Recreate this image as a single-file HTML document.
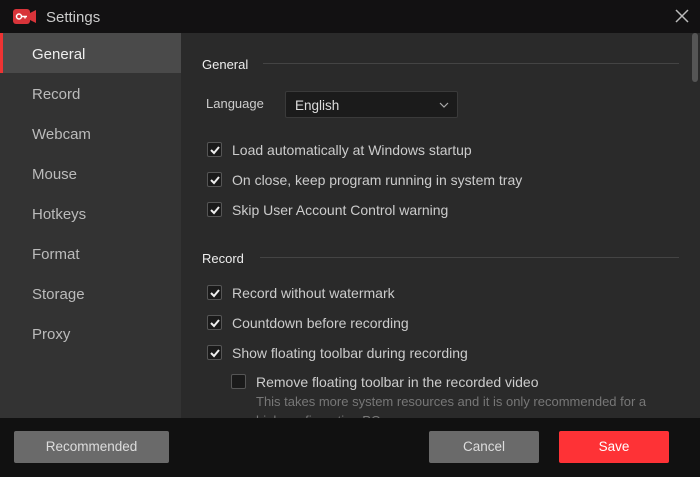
<!DOCTYPE html>
<html><head><style>
*{margin:0;padding:0;box-sizing:border-box}
body{width:700px;height:477px;background:#111;font-family:"Liberation Sans",sans-serif;overflow:hidden;position:relative;color:#ddd}
.title{position:absolute;left:0;top:0;width:700px;height:33px;background:#121112}
.title span{position:absolute;left:46px;top:8px;font-size:15px;color:#ccc}
.side{position:absolute;left:0;top:33px;width:181px;height:385px;background:#333}
.side div{height:40px;line-height:43px;padding-left:32px;font-size:15px;color:#bbb}
.side .sel{background:#4a4a4a;color:#eee;border-left:3px solid #e33;padding-left:29px}
.main{position:absolute;left:181px;top:33px;width:519px;height:385px;background:#2a2a2a;overflow:hidden}
.h{position:absolute;left:21px;font-size:13px;color:#eee}
.line{position:absolute;height:1px;background:#444;right:21px}
.cb{position:absolute;font-size:14px;color:#ccc;white-space:nowrap}
.cb i{position:absolute;left:-25px;top:0;width:15px;height:15px;border:1px solid #555;background:#1a1a1a;border-radius:2px}
.cb i svg{position:absolute;left:1px;top:1px}
.btn{position:absolute;top:431px;height:32px;line-height:32px;text-align:center;font-size:13.5px;border-radius:2px}
</style></head><body>
<div class="title">
<svg style="position:absolute;left:13px;top:9px" width="24" height="15" viewBox="0 0 24 15"><rect x="0" y="0" width="17" height="15" rx="3" fill="#d8343a"/><path d="M17 4l6-3v13l-6-3z" fill="#d8343a"/><circle cx="6" cy="7.5" r="2.5" fill="none" stroke="#fff" stroke-width="1.5"/><path d="M8 7.5h6M12 7.5v2" stroke="#fff" stroke-width="1.5"/></svg>
<span style="top:9px">Settings</span>
<svg style="position:absolute;left:675px;top:9px" width="14" height="14"><path d="M1 1L13 13M13 1L1 13" stroke="#bbb" stroke-width="1.5"/></svg>
</div>
<div class="side">
<div class="sel">General</div><div>Record</div><div>Webcam</div><div>Mouse</div><div>Hotkeys</div><div>Format</div><div>Storage</div><div>Proxy</div>
</div>
<div class="main">
<div style="position:absolute;left:511px;top:0;width:6px;height:49px;background:#555;border-radius:3px"></div>
<div class="h" style="top:24px">General</div><div class="line" style="left:82px;top:30px"></div>
<div style="position:absolute;left:25px;top:63px;font-size:13px;color:#ccc">Language</div>
<div style="position:absolute;left:104px;top:58px;width:173px;height:27px;background:#1b1b1b;border:1px solid #3a3a3a;border-radius:2px;font-size:13.5px;color:#ddd;padding:6px 0 0 9px">English
<svg style="position:absolute;right:8px;top:10px" width="10" height="6"><path d="M1 1l4 4 4-4" stroke="#aaa" fill="none" stroke-width="1.2"/></svg></div>
<div class="cb" style="left:51px;top:109px"><i><svg width="12" height="12"><path d="M2 6l3 3 5-6" stroke="#eee" stroke-width="2" fill="none"/></svg></i>Load automatically at Windows startup</div>
<div class="cb" style="left:51px;top:139px"><i><svg width="12" height="12"><path d="M2 6l3 3 5-6" stroke="#eee" stroke-width="2" fill="none"/></svg></i>On close, keep program running in system tray</div>
<div class="cb" style="left:51px;top:169px"><i><svg width="12" height="12"><path d="M2 6l3 3 5-6" stroke="#eee" stroke-width="2" fill="none"/></svg></i>Skip User Account Control warning</div>
<div class="h" style="top:218px">Record</div><div class="line" style="left:79px;top:224px"></div>
<div class="cb" style="left:51px;top:252px"><i><svg width="12" height="12"><path d="M2 6l3 3 5-6" stroke="#eee" stroke-width="2" fill="none"/></svg></i>Record without watermark</div>
<div class="cb" style="left:51px;top:282px"><i><svg width="12" height="12"><path d="M2 6l3 3 5-6" stroke="#eee" stroke-width="2" fill="none"/></svg></i>Countdown before recording</div>
<div class="cb" style="left:51px;top:312px"><i><svg width="12" height="12"><path d="M2 6l3 3 5-6" stroke="#eee" stroke-width="2" fill="none"/></svg></i>Show floating toolbar during recording</div>
<div class="cb" style="left:75px;top:341px"><i></i>Remove floating toolbar in the recorded video</div>
<div style="position:absolute;left:75px;top:359px;font-size:13px;color:#777;width:405px;line-height:19px">This takes more system resources and it is only recommended for a high configuration PC</div>
</div>
<div class="btn" style="left:14px;width:155px;background:#6a6a6a;color:#ddd">Recommended</div>
<div class="btn" style="left:429px;width:110px;background:#6a6a6a;color:#ddd">Cancel</div>
<div class="btn" style="left:559px;width:110px;background:#fe3236;color:#fff">Save</div>
</body></html>
